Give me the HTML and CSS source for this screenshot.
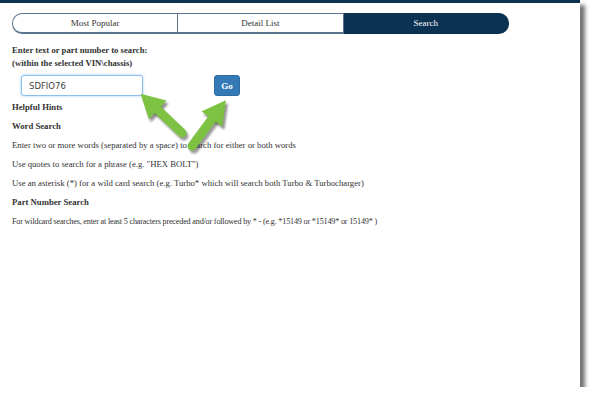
FILE: index.html
```html
<!DOCTYPE html>
<html lang="en">
<head>
    <meta charset="UTF-8">
    <meta name="viewport" content="width=device-width, initial-scale=1.0">
    <title>Part Search</title>
    <link rel="stylesheet" href="styles.css">
</head>
<body>
    <div class="frame">
        <div class="tabs">
            <div class="tab tab-first">Most Popular</div>
            <div class="tab">Detail List</div>
            <div class="tab tab-last active">Search</div>
        </div>

        <div class="search-box">
            <p class="label">Enter text or part number to search:<br>(within the selected VIN\chassis)</p>
            <div class="search-row">
                <input type="text" class="search-input" value="SDFIO76">
                <button class="go-btn">Go</button>
            </div>
        </div>

        <div class="hints">
            <p class="hint-title">Helpful Hints</p>
            <p class="hint-title">Word Search</p>
            <p>Enter two or more words (separated by a space) to search for either or both words</p>
            <p>Use quotes to search for a phrase (e.g. "HEX BOLT")</p>
            <p>Use an asterisk (*) for a wild card search (e.g. Turbo* which will search both Turbo &amp; Turbocharger)</p>
            <p class="hint-title">Part Number Search</p>
            <p class="hint-tight">For wildcard searches, enter at least 5 characters preceded and/or followed by * - (e.g. *15149 or *15149* or 15149* )</p>
        </div>

        <!-- callout arrows -->
        <svg class="arrows" width="595" height="402" viewBox="0 0 595 402">
            <defs>
                <g id="arrow">
                    <line x1="0" y1="0" x2="38" y2="0" stroke-width="9" stroke-linecap="round"/>
                    <polygon points="34,-12 56,0 34,12"/>
                </g>
                <filter id="soft" x="-20%" y="-20%" width="140%" height="140%">
                    <feGaussianBlur stdDeviation="1.2"/>
                </filter>
            </defs>
            <g class="arrow-shadow" filter="url(#soft)">
                <use href="#arrow" transform="translate(184,136) rotate(-136.5)"/>
                <use href="#arrow" transform="translate(194,149) rotate(-53.5)"/>
            </g>
            <g class="arrow-fill">
                <use href="#arrow" transform="translate(182,133) rotate(-136.5)"/>
                <use href="#arrow" transform="translate(192,146) rotate(-53.5)"/>
            </g>
        </svg>
    </div>
</body>
</html>
```

FILE: styles.css
```css
body {
    margin: 0;
    padding: 0;
    background-color: #ffffff;
    font-family: "Liberation Serif", "Times New Roman", serif;
    color: #333;
}

.frame {
    position: relative;
    width: 580px;
    height: 384px;
    background: white;
    border-top: 3px solid #0c3252;
    box-shadow: 5px 5px 4px rgba(0, 0, 0, 0.55);
}

.tabs {
    display: flex;
    width: 497px;
    margin-left: 12px;
    padding-top: 10px;
}

.tab {
    flex: 1;
    height: 18px;
    line-height: 18px;
    text-align: center;
    font-size: 9px;
    border: 1px solid #5b7590;
    border-bottom-width: 2px;
    border-left: none;
    color: #333;
}

.tab-first {
    border-left: 1px solid #5b7590;
    border-radius: 10px 0 0 10px;
}

.tab-last {
    border-radius: 0 10px 10px 0;
}

.tab.active {
    background-color: #0c3252;
    border-color: #0c3252;
    color: white;
}

.search-box {
    padding-left: 12px;
    margin-top: 10px;
}

.label {
    margin: 0;
    font-size: 8.7px;
    font-weight: bold;
    line-height: 13px;
    color: #333;
}

.search-row {
    display: flex;
    gap: 71px;
    margin-top: 5px;
    padding-left: 9px;
}

.search-input {
    box-sizing: border-box;
    width: 122px;
    height: 21px;
    padding: 0 7px;
    font-family: "DejaVu Sans", Verdana, sans-serif;
    font-size: 8.5px;
    color: #444;
    border: 1px solid #8cbfe9;
    border-radius: 3px;
    box-shadow: 0 0 3px rgba(102, 175, 233, 0.6);
    outline: none;
}

.go-btn {
    box-sizing: border-box;
    width: 26px;
    height: 21px;
    padding: 0;
    background-color: #337ab7;
    border: 1px solid #2e6da4;
    border-radius: 3px;
    color: white;
    font-family: "Liberation Serif", "Times New Roman", serif;
    font-size: 9px;
    font-weight: bold;
}

.hints {
    padding-left: 12px;
    margin-top: 2px;
}

.hints p {
    margin: 0;
    font-size: 8.7px;
    line-height: 19px;
    color: #333;
}

.hints .hint-title {
    font-weight: bold;
}

.hints .hint-tight {
    font-size: 8.2px;
    letter-spacing: -0.2px;
}

.arrows {
    position: absolute;
    top: -3px;
    left: 0;
    pointer-events: none;
}

.arrow-shadow {
    fill: rgba(0, 0, 0, 0.4);
    stroke: rgba(0, 0, 0, 0.4);
}

.arrow-fill {
    fill: #7dc242;
    stroke: #7dc242;
}
```
